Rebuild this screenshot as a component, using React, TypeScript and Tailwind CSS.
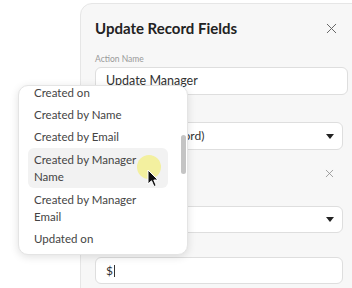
import { X } from 'lucide-react';

const font = { fontFamily: 'Lato, "Open Sans", sans-serif' };

function Caret() {
  return (
    <svg width="8" height="5" viewBox="0 0 8 5" className="shrink-0">
      <path d="M0 0 L8 0 L4 5 Z" fill="#222" />
    </svg>
  );
}

export default function App() {
  return (
    <div className="relative h-[288px] w-[352px] overflow-hidden bg-white" style={font}>
      {/* side panel */}
      <div className="ml-[80px] mt-[3px] h-[300px] w-[290px] rounded-tl-[12px] border border-[#e6e6e6] bg-[#f7f7f7] pl-[14px]">
        <div className="flex h-[48px] items-center justify-between pr-[29px] pt-[1px]">
          <h1 className="text-[15px] font-bold text-[#222]">Update Record Fields</h1>
          <X size={17} strokeWidth={1.4} className="text-[#666]" />
        </div>
        <div className="mt-[1px] text-[8.5px] leading-[12px] text-[#999]">Action Name</div>
        <div className="mt-[2px] flex h-[28px] w-[253px] items-center rounded-[6px] border border-[#dedede] bg-white pl-[10px] text-[12.5px] text-[#333]">
          Update Manager
        </div>
        <div className="mt-[5px] h-[12px]" />
        <div className="mt-[10px] flex h-[28px] w-[248px] items-center justify-between rounded-[6px] border border-[#dedede] bg-white pl-[16px] pr-[8px] text-[12px] text-[#333]">
          <span>Manager (Record)</span>
          <Caret />
        </div>
        <div className="flex h-[46px] w-[248px] items-center justify-end pr-[7px]">
          <X size={13} strokeWidth={1.4} className="text-[#888]" />
        </div>
        <div className="mt-[10px] flex h-[27px] w-[248px] items-center justify-end rounded-[6px] border border-[#dedede] bg-white pl-[10px] pr-[8px] text-[12px] text-[#333]">
          <Caret />
        </div>
        <div className="mt-[4px] h-[20px]" />
        <div className="flex h-[27px] w-[248px] items-center rounded-[6px] border border-[#dedede] bg-white pl-[10px] text-[12px] text-[#333]">
          $<span className="ml-[1px] h-[12px] w-[1px] bg-[#333]" />
        </div>
      </div>

      {/* dropdown menu */}
      <div className="absolute left-[18px] top-[85px] h-[170px] w-[170px] overflow-hidden rounded-[10px] border border-[#e4e4e4] bg-white shadow-[0_2px_8px_rgba(0,0,0,0.12)]">
        <div className="mt-[-4px] flex flex-col px-[9px] text-[11.5px] text-[#444]">
          <div className="flex h-[22px] items-center pl-[6px]">Created on</div>
          <div className="flex h-[22px] items-center pl-[6px]">Created by Name</div>
          <div className="flex h-[22px] items-center pl-[6px]">Created by Email</div>
          <div className="mr-[10px] rounded-[6px] bg-[#f2f2f2] py-[3px] pl-[6px] leading-[17px]">Created by Manager<br />Name</div>
          <div className="py-[3px] pl-[6px] leading-[17px]">Created by Manager<br />Email</div>
          <div className="flex h-[22px] items-center pl-[6px]">Updated on</div>
        </div>
        <div className="absolute left-[162px] top-[49px] h-[39px] w-[5px] rounded-full bg-[#c4c4c4]" />
      </div>

      {/* cursor highlight */}
      <div className="absolute left-[137px] top-[155px] h-[24px] w-[24px] rounded-full bg-[#f3ef8a]/80" />
      <svg className="absolute left-[147px] top-[169px]" width="12" height="19" viewBox="0 0 12 19">
        <path d="M1 1 L1 15 L4.5 11.8 L7 17.5 L9.2 16.5 L6.8 11 L11 11 Z" fill="#111" stroke="#fff" strokeWidth="1" strokeLinejoin="round" />
      </svg>
    </div>
  );
}
